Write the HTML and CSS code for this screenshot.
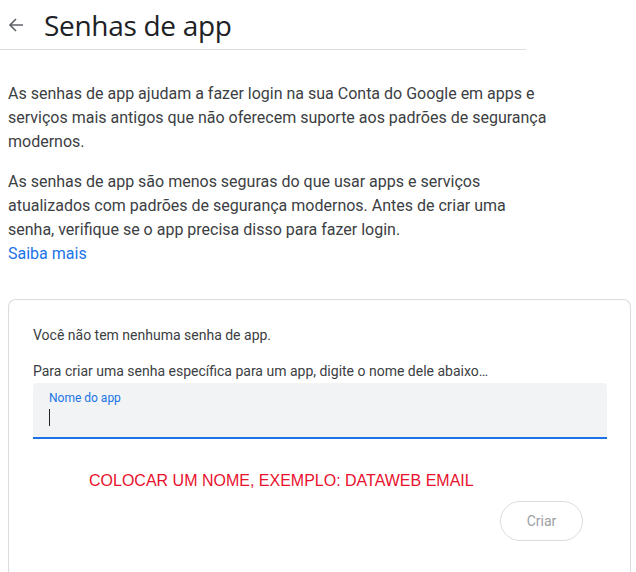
FILE: index.html
```html
<!DOCTYPE html>
<html lang="pt-BR">
<head>
    <meta charset="UTF-8">
    <meta name="viewport" content="width=device-width, initial-scale=1.0">
    <title>Senhas de app</title>
    <link rel="stylesheet" href="styles.css">
</head>
<body>
    <div class="header">
        <button class="back" aria-label="Voltar">
            <svg width="16" height="16" viewBox="0 0 16 16"><path d="M15 8H2M8 2L2 8l6 6" fill="none" stroke="#5f6368" stroke-width="1.6"/></svg>
        </button>
        <h1>Senhas de app</h1>
    </div>
    <div class="content">
        <p>As senhas de app ajudam a fazer login na sua Conta do Google em apps e serviços mais antigos que não oferecem suporte aos padrões de segurança modernos.</p>
        <p class="second">As senhas de app são menos seguras do que usar apps e serviços atualizados com padrões de segurança modernos. Antes de criar uma senha, verifique se o app precisa disso para fazer login.</p>
        <a href="#" class="more">Saiba mais</a>

        <div class="card">
            <div class="empty">Você não tem nenhuma senha de app.</div>
            <div class="hint">Para criar uma senha específica para um app, digite o nome dele abaixo…</div>
            <div class="field">
                <label>Nome do app</label>
                <span class="caret"></span>
            </div>
            <div class="note">COLOCAR UM NOME, EXEMPLO: DATAWEB EMAIL</div>
            <div class="actions">
                <button class="create" disabled>Criar</button>
            </div>
        </div>
    </div>
</body>
</html>
```

FILE: styles.css
```css
body { margin: 0; font-family: Roboto, Arial, sans-serif; color: #3c4043; background: #fff; overflow: hidden; }
.header { display: flex; align-items: center; width: 526px; height: 49px; border-bottom: 1px solid #dadce0; }
.back { display: flex; align-items: center; justify-content: center; width: 32px; height: 32px; padding: 0; border: none; background: none; cursor: pointer; }
.header h1 { margin: 0 0 0 12px; font-family: "Open Sans", Roboto, sans-serif; font-size: 28px; font-weight: 400; color: #202124; line-height: 36px; letter-spacing: -0.3px; }
.content { padding: 32px 5px 0 8px; }
.content p { margin: 0; width: 560px; font-size: 16px; line-height: 24px; }
.content p.second { margin-top: 16px; width: 530px; }
.more { display: block; font-size: 16px; line-height: 24px; color: #1a73e8; text-decoration: none; }
.card { margin-top: 33px; border: 1px solid #dadce0; border-bottom: none; border-radius: 8px 8px 0 0; height: 248px; padding: 25px 24px 0 24px; }
.empty { font-size: 14px; line-height: 20px; }
.hint { margin-top: 16px; font-size: 14px; line-height: 20px; }
.field { position: relative; height: 54px; margin-top: 2px; width: 574px; background: #f1f3f4; border-radius: 4px 4px 0 0; border-bottom: 2px solid #1a73e8; }
.field label { position: absolute; left: 16px; top: 8px; font-size: 12px; color: #1a73e8; }
.caret { position: absolute; left: 16px; top: 26px; width: 1px; height: 17px; background: #202124; }
.note { margin: 32px 0 0 56px; font-family: "Liberation Sans", Arial, sans-serif; font-size: 16px; line-height: 20px; color: #e8112d; }
.actions { display: flex; justify-content: flex-end; padding-right: 23px; margin-top: 10px; }
.create { width: 83px; height: 40px; border: 1px solid #dadce0; border-radius: 20px; background: #fff; font-family: Roboto, Arial, sans-serif; font-size: 14px; color: #9aa0a6; }
```
